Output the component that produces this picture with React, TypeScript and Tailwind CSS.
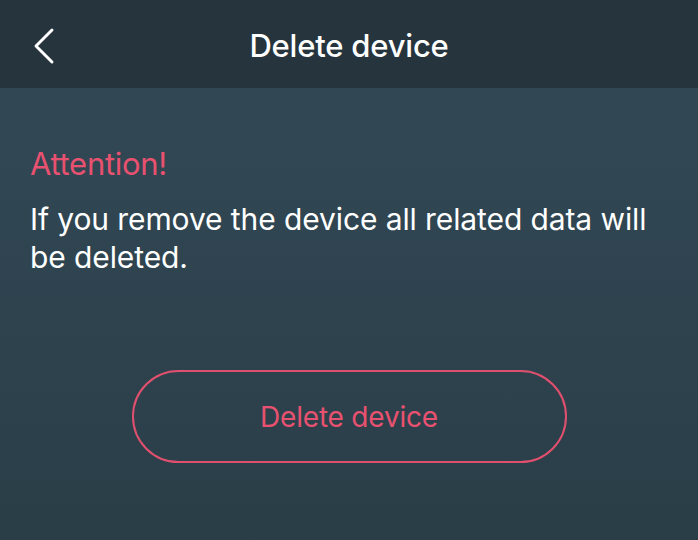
import { ChevronLeft } from "lucide-react";

export default function App() {
  return (
    <div className="w-[698px] h-[540px] flex flex-col font-['Inter',sans-serif] bg-gradient-to-b from-[#334a57] to-[#2a3e48]">
      {/* Header */}
      <div className="relative h-[88px] shrink-0 bg-[#26353d] flex justify-center pt-[28px]">
        <ChevronLeft className="absolute left-[12px] top-[14px] text-white" size={64} strokeWidth={1.1} />
        <h1 className="text-white text-[31px] leading-[36px] font-medium tracking-[-0.2px]">Delete device</h1>
      </div>

      {/* Content */}
      <div className="px-[30px] pt-[58px]">
        <p className="text-[#e8516f] text-[31px] leading-[36px] tracking-[-0.3px]">Attention!</p>
        <p className="mt-[18px] text-white text-[30px] leading-[38px] tracking-[-0.1px]">
          If you remove the device all related data will be deleted.
        </p>
      </div>

      <div className="flex justify-center mt-[94px]">
        <button className="w-[435px] h-[93px] rounded-full border-2 border-[#e0506e] text-[#e8516f] text-[28px] tracking-[-0.2px]">
          Delete device
        </button>
      </div>
    </div>
  );
}
